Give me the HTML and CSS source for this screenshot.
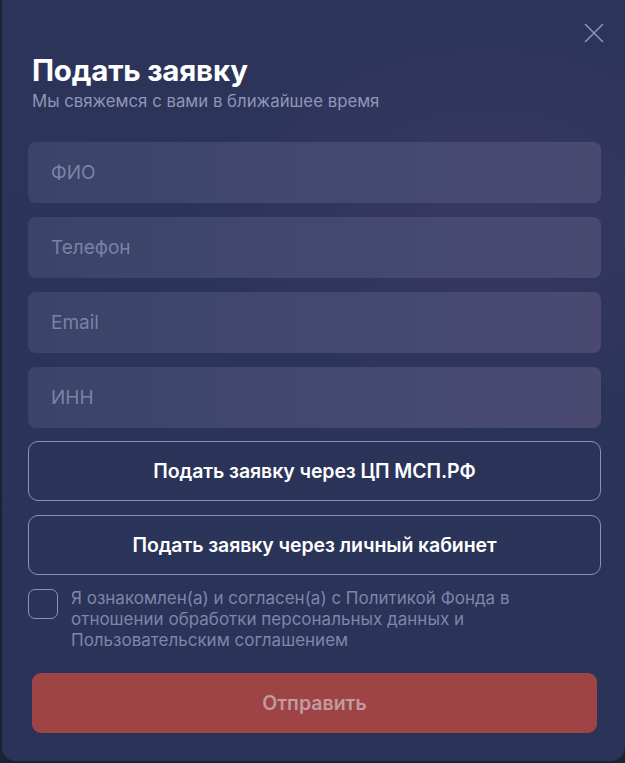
FILE: index.html
```html
<!DOCTYPE html>
<html lang="ru">
<head>
<meta charset="utf-8">
<link rel="stylesheet" href="styles.css">
</head>
<body>
<div class="modal">
  <button class="close" aria-label="Закрыть">
    <svg width="20" height="20" viewBox="0 0 20 20"><path d="M1 1 L19 19 M19 1 L1 19" stroke="#8e95b8" stroke-width="1.5" fill="none"/></svg>
  </button>
  <h1 class="title">Подать заявку</h1>
  <p class="subtitle">Мы свяжемся с вами в ближайшее время</p>
  <form class="form">
    <div class="field">ФИО</div>
    <div class="field">Телефон</div>
    <div class="field">Email</div>
    <div class="field">ИНН</div>
    <div class="outline-btn">Подать заявку через ЦП МСП.РФ</div>
    <div class="outline-btn">Подать заявку через личный кабинет</div>
    <label class="agree">
      <span class="checkbox"></span>
      <span class="agree-text">Я ознакомлен(а) и согласен(а) с Политикой Фонда в отношении обработки персональных данных и Пользовательским соглашением</span>
    </label>
    <div class="submit">Отправить</div>
  </form>
</div>
</body>
</html>
```

FILE: styles.css
```css
html, body {
  margin: 0;
  padding: 0;
  height: 100%;
}
body {
  background: #1c2236;
  font-family: "Inter", "Roboto", "Liberation Sans", sans-serif;
  overflow: hidden;
}
.modal {
  position: relative;
  box-sizing: border-box;
  margin: -12px 0 0 2px;
  height: 773px;
  border-radius: 14px;
  background:
    radial-gradient(ellipse 420px 300px at 78% 30%, rgba(78, 62, 112, 0.4), rgba(78, 62, 112, 0) 70%),
    linear-gradient(180deg, #2c345a 0%, #2a3358 100%);
  padding: 65px 24px 0 26px;
}
.close {
  position: absolute;
  top: 34px;
  right: 20px;
  width: 22px;
  height: 22px;
  padding: 0;
  border: 0;
  background: none;
  display: flex;
  align-items: center;
  justify-content: center;
}
.title {
  margin: 0 0 0 4px;
  font-size: 29.5px;
  line-height: 35px;
  font-weight: 700;
  color: #ffffff;
  letter-spacing: -0.2px;
}
.subtitle {
  margin: 3px 0 0 4px;
  font-size: 16.8px;
  line-height: 20px;
  color: #8f96b6;
}
.form {
  margin-top: 31px;
  display: flex;
  flex-direction: column;
}
.field {
  height: 61px;
  margin-bottom: 14px;
  border-radius: 8px;
  background: linear-gradient(90deg, #3a4368 0%, #434870 50%, #4a4a71 100%);
  color: #7b82a6;
  font-size: 19px;
  display: flex;
  align-items: center;
  padding-left: 23px;
}
.field:nth-child(4) {
  margin-bottom: 13px;
}
.outline-btn {
  height: 58px;
  margin-bottom: 14px;
  border: 1px solid #8c93b4;
  border-radius: 10px;
  display: flex;
  align-items: center;
  justify-content: center;
  color: #ffffff;
  font-size: 19.5px;
  font-weight: 600;
  letter-spacing: -0.1px;
}
.agree {
  display: flex;
  gap: 13px;
  align-items: flex-start;
}
.checkbox {
  flex: none;
  width: 28px;
  height: 28px;
  border: 1px solid #8c93b4;
  border-radius: 7px;
}
.agree-text {
  font-size: 17px;
  line-height: 21px;
  color: #7f86a8;
  margin-top: -1px;
  max-width: 470px;
}
.submit {
  margin: 22px 4px 0 4px;
  height: 60px;
  border-radius: 9px;
  background: #9e4444;
  color: #c29aa3;
  font-size: 19.5px;
  font-weight: 600;
  display: flex;
  align-items: center;
  justify-content: center;
}
```
